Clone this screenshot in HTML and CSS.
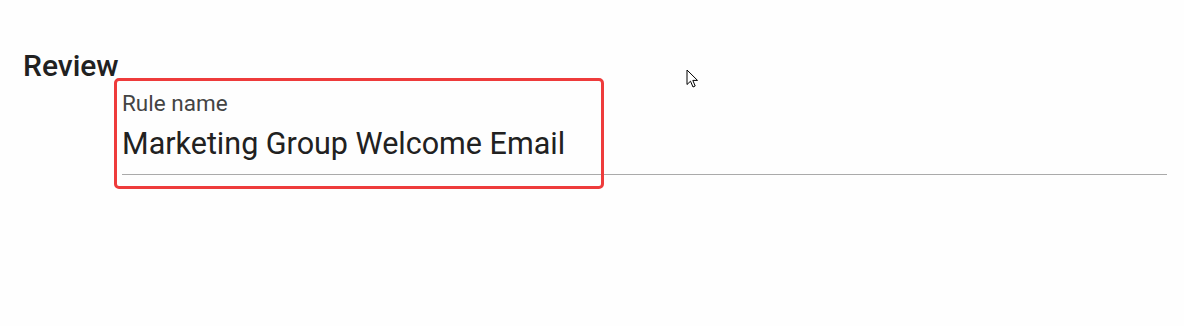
FILE: index.html
```html
<!DOCTYPE html>
<html>
<head>
<meta charset="utf-8">
<link rel="stylesheet" href="styles.css">
</head>
<body>
<div class="page">
  <h2 class="title">Review</h2>
  <div class="field">
    <div class="label">Rule name</div>
    <div class="value">Marketing Group Welcome Email</div>
    <div class="highlight"></div>
  </div>
  <svg class="cursor" width="13" height="20" viewBox="0 0 13 20">
    <path d="M1 1 L1 15.5 L4.5 12.2 L7 18 L9.2 17 L6.8 11.4 L11.5 11.4 Z" fill="#fff" stroke="#000" stroke-width="1" stroke-linejoin="miter"/>
  </svg>
</div>
</body>
</html>
```
FILE: styles.css
```css
html, body {
  margin: 0;
  padding: 0;
  background: #fefefe;
}
.page {
  position: relative;
  width: 1184px;
  height: 326px;
  font-family: Roboto, "Liberation Sans", sans-serif;
  color: #212121;
}
.title {
  margin: 0;
  padding: 48px 0 0 23px;
  font-size: 30px;
  font-weight: 500;
  line-height: 36px;
  height: 36px;
}
.field {
  position: relative;
  margin: 0 17px 0 122px;
  padding-top: 6px;
  border-bottom: 1px solid #aaaaaa;
}
.label {
  font-size: 22.5px;
  line-height: 26px;
  color: #444;
}
.value {
  margin-top: 9px;
  font-size: 30.5px;
  line-height: 38px;
  padding-bottom: 11px;
  color: #212121;
}
.highlight {
  position: absolute;
  left: -8px;
  top: -6px;
  width: 484px;
  height: 105px;
  border: 3px solid #ee3b3b;
  border-radius: 5px;
}
.cursor {
  position: absolute;
  left: 686px;
  top: 69px;
}
```
